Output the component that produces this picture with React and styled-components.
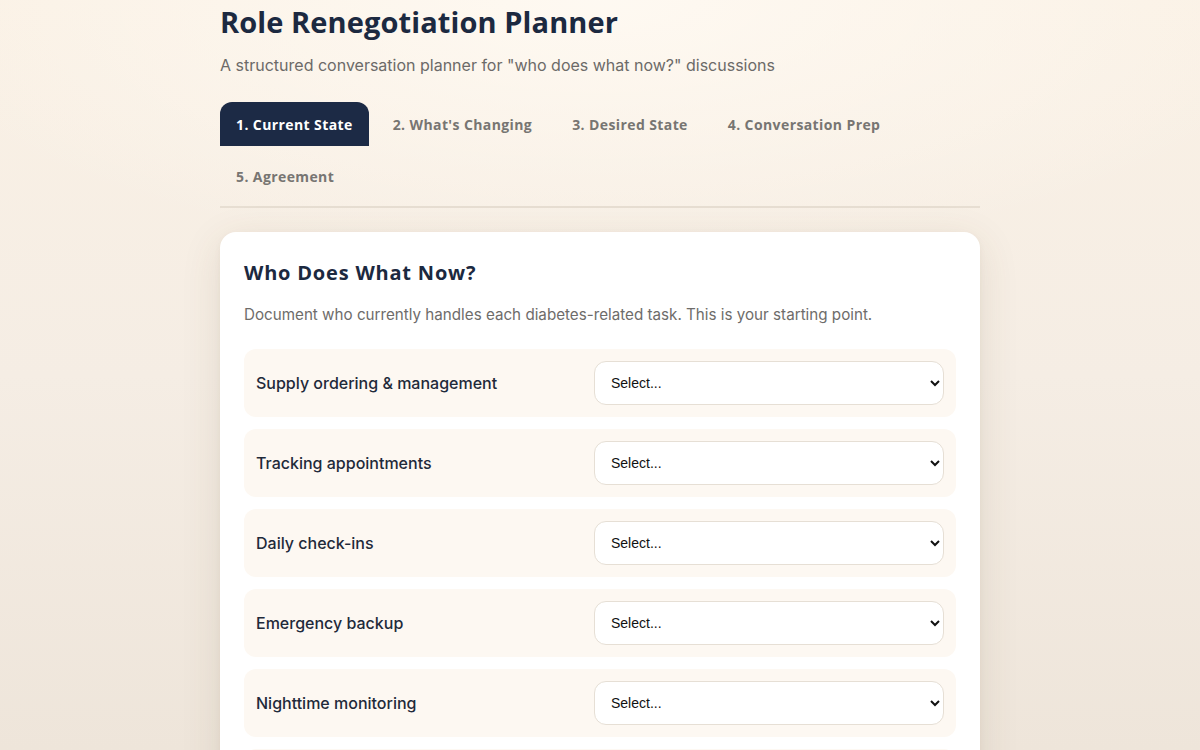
import React, { useState } from "react";
import styled, { createGlobalStyle } from "styled-components";

const Global = createGlobalStyle`
  html, body { margin: 0; padding: 0; }
  body {
    min-height: 100vh;
    font-family: Inter, "Noto Sans", sans-serif;
    background:
      radial-gradient(ellipse 60% 35% at 50% 0%, rgba(255,250,243,0.9), rgba(255,250,243,0) 100%),
      linear-gradient(180deg, #faf1e5 0%, #f5ede4 50%, #eee5da 100%);
    background-attachment: fixed;
    overflow: hidden;
  }
`;

const Page = styled.div`
  width: 760px;
  margin: 0 auto;
  padding-top: 4px;
`;

const Title = styled.h1`
  margin: 0;
  font-family: "Open Sans", sans-serif;
  font-weight: 700;
  font-size: 29px;
  line-height: 36px;
  color: #1c2940;
  letter-spacing: 0.1px;
`;

const Subtitle = styled.p`
  margin: 14px 0 0;
  font-size: 16px;
  line-height: 22px;
  color: #6c6a68;
`;

const Tabs = styled.nav`
  display: flex;
  flex-wrap: wrap;
  gap: 8px;
  margin-top: 26px;
  padding-bottom: 8px;
  border-bottom: 2px solid #e7ded2;
`;

const Tab = styled.button`
  height: 44px;
  padding: 0 16px;
  border: none;
  border-radius: 12px 12px 0 0;
  font-family: "Open Sans", sans-serif;
  font-weight: 700;
  font-size: 14px;
  letter-spacing: 0.4px;
  cursor: pointer;
  background: ${(p) => (p.$active ? "#1c2a45" : "transparent")};
  color: ${(p) => (p.$active ? "#ffffff" : "#777572")};
`;

const Card = styled.section`
  margin-top: 24px;
  background: #ffffff;
  border-radius: 16px;
  padding: 24px;
  box-shadow: 0 10px 40px rgba(90, 70, 40, 0.12), 0 2px 6px rgba(90, 70, 40, 0.05);
`;

const CardTitle = styled.h2`
  margin: 4px 0 0;
  font-family: "Open Sans", sans-serif;
  font-weight: 700;
  font-size: 20px;
  line-height: 26px;
  letter-spacing: 0.8px;
  color: #1c2940;
`;

const CardText = styled.p`
  margin: 18px 0 23px;
  font-size: 15.2px;
  line-height: 22px;
  color: #6e6c6a;
`;

const List = styled.div`
  display: flex;
  flex-direction: column;
  gap: 12px;
`;

const Row = styled.div`
  display: flex;
  align-items: center;
  justify-content: space-between;
  padding: 12px;
  background: #fdf8f2;
  border-radius: 12px;
`;

const Label = styled.span`
  font-size: 16px;
  font-weight: 500;
  color: #1f2a3a;
`;

const Select = styled.select`
  width: 350px;
  height: 44px;
  padding: 0 10px 0 12px;
  border: 1px solid #e6dfd5;
  border-radius: 12px;
  background: #ffffff;
  font-family: Arial, "Liberation Sans", sans-serif;
  font-size: 14px;
  color: #111;
`;

const tabs = ["1. Current State", "2. What's Changing", "3. Desired State", "4. Conversation Prep", "5. Agreement"];
const tasks = [
  "Supply ordering & management",
  "Tracking appointments",
  "Daily check-ins",
  "Emergency backup",
  "Nighttime monitoring",
  "Insurance & paperwork",
];

export default function App() {
  const [active, setActive] = useState(0);
  return (
    <>
      <Global />
      <Page>
        <Title>Role Renegotiation Planner</Title>
        <Subtitle>A structured conversation planner for "who does what now?" discussions</Subtitle>
        <Tabs>
          {tabs.map((t, i) => (
            <Tab key={t} $active={i === active} onClick={() => setActive(i)}>
              {t}
            </Tab>
          ))}
        </Tabs>
        <Card>
          <CardTitle>Who Does What Now?</CardTitle>
          <CardText>Document who currently handles each diabetes-related task. This is your starting point.</CardText>
          <List>
            {tasks.map((t) => (
              <Row key={t}>
                <Label>{t}</Label>
                <Select defaultValue="">
                  <option value="">Select...</option>
                  <option>Me</option>
                  <option>My partner</option>
                  <option>Shared</option>
                  <option>Someone else</option>
                </Select>
              </Row>
            ))}
          </List>
        </Card>
      </Page>
    </>
  );
}
